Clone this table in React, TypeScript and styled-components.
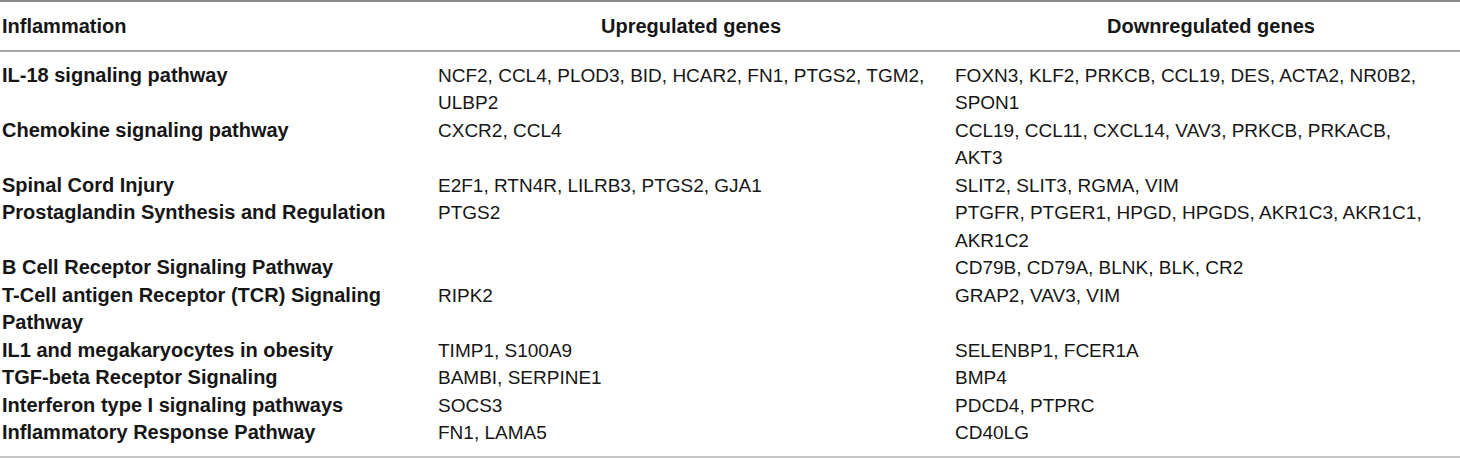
import React from "react";
import styled, { createGlobalStyle } from "styled-components";

const GlobalStyle = createGlobalStyle`
  html, body {
    margin: 0;
    padding: 0;
    background: #ffffff;
  }
  body {
    font-family: "Liberation Sans", Arial, Helvetica, sans-serif;
    color: #161616;
  }
`;

const Table = styled.div`
  width: 1460px;
  border-top: 2px solid #8a8a8a;
  border-bottom: 3px solid #c6c6c6;
  box-sizing: border-box;
`;

const Row = styled.div<{ $head?: boolean }>`
  display: grid;
  grid-template-columns: 436px 517px 1fr;
  padding-left: 2px;
  line-height: 27.5px;
  ${(p) =>
    p.$head
      ? `padding-top: 11px; padding-bottom: 9px; border-bottom: 2px solid #a9a9a9;`
      : ``}
`;

const Body = styled.div`
  padding-top: 10px;
  padding-bottom: 9px;
`;

const HeadCell = styled.div<{ $col: number }>`
  font-weight: 700;
  font-size: 20px;
  text-align: ${(p) => (p.$col === 0 ? "left" : "center")};
  padding-right: ${(p) => (p.$col === 1 ? "11px" : "0")};
  padding-left: ${(p) => (p.$col === 2 ? "7px" : "0")};
`;

const NameCell = styled.div`
  font-weight: 700;
  font-size: 20px;
  padding-right: 10px;
`;

const GeneCell = styled.div<{ $col: number }>`
  font-size: 19px;
  padding-right: ${(p) => (p.$col === 1 ? "11px" : "25px")};
`;

const rows: [string, string, string][] = [
  [
    "IL-18 signaling pathway",
    "NCF2, CCL4, PLOD3, BID, HCAR2, FN1, PTGS2, TGM2, ULBP2",
    "FOXN3, KLF2, PRKCB, CCL19, DES, ACTA2, NR0B2, SPON1",
  ],
  [
    "Chemokine signaling pathway",
    "CXCR2, CCL4",
    "CCL19, CCL11, CXCL14, VAV3, PRKCB, PRKACB, AKT3",
  ],
  [
    "Spinal Cord Injury",
    "E2F1, RTN4R, LILRB3, PTGS2, GJA1",
    "SLIT2, SLIT3, RGMA, VIM",
  ],
  [
    "Prostaglandin Synthesis and Regulation",
    "PTGS2",
    "PTGFR, PTGER1, HPGD, HPGDS, AKR1C3, AKR1C1, AKR1C2",
  ],
  ["B Cell Receptor Signaling Pathway", "", "CD79B, CD79A, BLNK, BLK, CR2"],
  [
    "T-Cell antigen Receptor (TCR) Signaling Pathway",
    "RIPK2",
    "GRAP2, VAV3, VIM",
  ],
  ["IL1 and megakaryocytes in obesity", "TIMP1, S100A9", "SELENBP1, FCER1A"],
  ["TGF-beta Receptor Signaling", "BAMBI, SERPINE1", "BMP4"],
  ["Interferon type I signaling pathways", "SOCS3", "PDCD4, PTPRC"],
  ["Inflammatory Response Pathway", "FN1, LAMA5", "CD40LG"],
];

export default function App() {
  return (
    <>
      <GlobalStyle />
      <Table>
        <Row $head>
          <HeadCell $col={0}>Inflammation</HeadCell>
          <HeadCell $col={1}>Upregulated genes</HeadCell>
          <HeadCell $col={2}>Downregulated genes</HeadCell>
        </Row>
        <Body>
          {rows.map(([name, up, down]) => (
            <Row key={name}>
              <NameCell>{name}</NameCell>
              <GeneCell $col={1}>{up}</GeneCell>
              <GeneCell $col={2}>{down}</GeneCell>
            </Row>
          ))}
        </Body>
      </Table>
    </>
  );
}
